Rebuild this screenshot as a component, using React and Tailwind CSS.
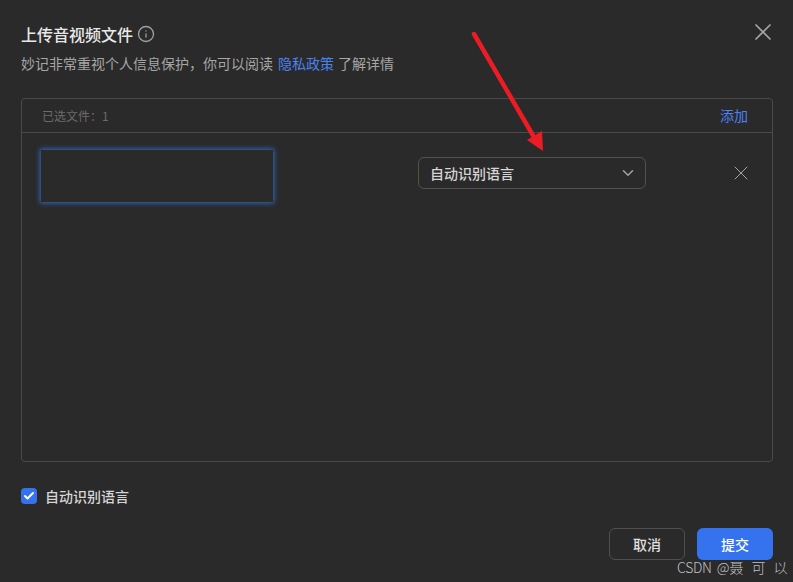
import React from "react";
import { X, ChevronDown, Info, Check } from "lucide-react";

const font = { fontFamily: '"Noto Sans CJK SC", "Liberation Sans", sans-serif' };

export default function App() {
  return (
    <div
      style={font}
      className="relative w-[793px] h-[582px] overflow-hidden bg-[#2a2a2a] pt-[24px] pl-[21px] pr-[20px] flex flex-col"
    >
      {/* header */}
      <div className="flex items-center h-[20px] gap-[4px]">
        <h1 className="text-[16px] leading-[20px] font-medium text-[#e8e8e8]">上传音视频文件</h1>
        <Info size={18} strokeWidth={1.75} className="text-[#a0a0a0]" />
      </div>
      <p className="mt-[9px] text-[14px] leading-[20px] text-[#a6a6a6]">
        妙记非常重视个人信息保护，你可以阅读<span className="ml-[5px] mr-[4px] text-[#4c82f0]">隐私政策</span>了解详情
      </p>
      <button className="absolute top-[18px] right-[16px] text-[#a3a3a3]">
        <X size={28} strokeWidth={1.5} />
      </button>

      {/* file box */}
      <div className="mt-[25px] h-[364px] border border-[#4a4a4a] rounded-[4px]">
        <div className="h-[34px] flex items-center justify-between pl-[20px] pr-[24px] border-b border-[#4a4a4a]">
          <span className="text-[12px] text-[#6b6b6b]">已选文件：1</span>
          <span className="text-[14px] text-[#4c82f0]">添加</span>
        </div>
        <div className="flex items-center pt-[17px] pl-[19px]">
          <div className="w-[232px] h-[52px] bg-[#2a2a2a] shadow-[0_0_5px_1px_rgba(50,120,220,0.85)]"></div>
          <div className="ml-[145px] mt-[-6px] w-[228px] h-[32px] border border-[#525252] rounded-[6px] flex items-center justify-between pl-[11px] pr-[8px]">
            <span className="text-[14px] font-medium text-[#d6d6d6]">自动识别语言</span>
            <ChevronDown size={18} strokeWidth={2} className="text-[#a3a3a3]" />
          </div>
          <X size={24} strokeWidth={1} className="ml-[83px] mt-[-6px] text-[#a3a3a3]" />
        </div>
      </div>

      {/* checkbox */}
      <div className="mt-[25px] flex items-center gap-[8px] h-[18px]">
        <span className="w-[16px] h-[16px] rounded-[4px] bg-[#3573ee] flex items-center justify-center">
          <Check size={12} strokeWidth={4} className="text-white" />
        </span>
        <span className="text-[14px] font-medium text-[#d6d6d6]">自动识别语言</span>
      </div>

      {/* footer */}
      <div className="mt-[23px] flex justify-end gap-[12px]">
        <button className="w-[76px] h-[32px] rounded-[6px] border border-[#4f4f4f] text-[14px] font-medium text-[#e0e0e0]">
          取消
        </button>
        <button className="w-[76px] h-[32px] rounded-[6px] bg-[#3573ee] text-[14px] font-medium text-white">
          提交
        </button>
      </div>

      {/* screenshot annotation */}
      <svg className="absolute left-[460px] top-[20px]" width="100" height="140" viewBox="0 0 100 140">
        <line x1="14" y1="14" x2="78" y2="124" stroke="#ed1c24" strokeWidth="4.5" strokeLinecap="round" />
        <polygon points="67,120 82,111 83,131" fill="#ed1c24" />
      </svg>

      {/* watermark */}
      <span className="absolute left-[677px] top-[557px] text-[14px] leading-[20px] whitespace-pre font-light text-[#c0c0c0]">
        <span className="tracking-[-0.3px]">CSDN</span>
        <span className="ml-[5px] [word-spacing:5px]">@聂 可 以</span>
      </span>
    </div>
  );
}
